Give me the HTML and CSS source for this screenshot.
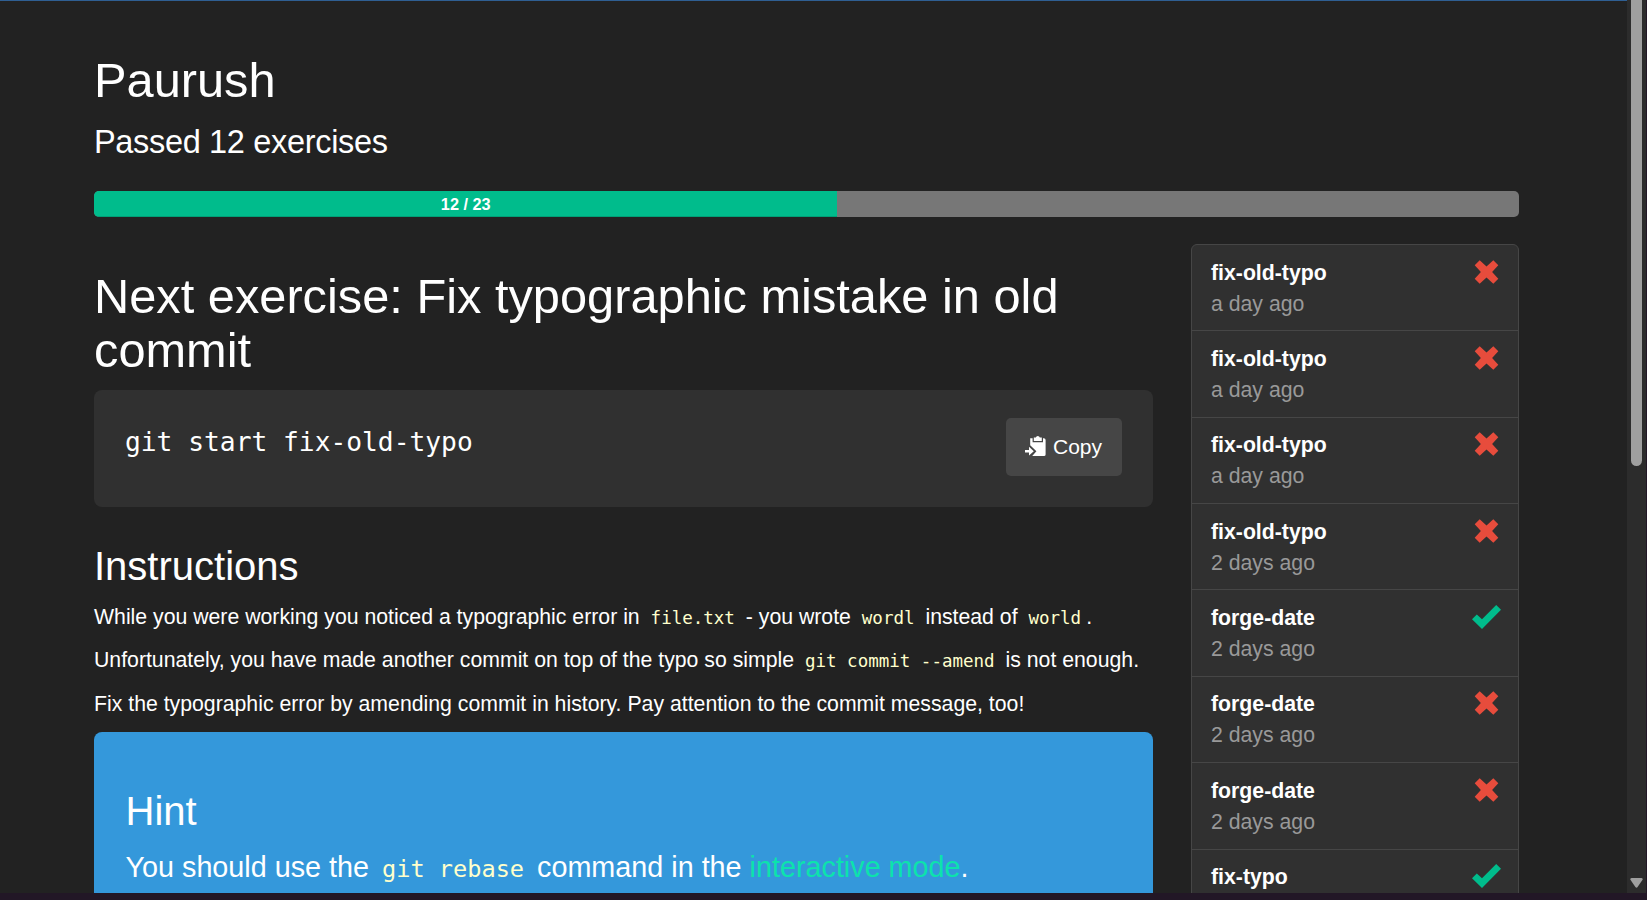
FILE: index.html
```html
<!DOCTYPE html>
<html lang="en">
<head>
<meta charset="utf-8">
<title>Paurush</title>
<link rel="stylesheet" href="styles.css">
</head>
<body>
<svg class="sprite" aria-hidden="true">
  <symbol id="remove" viewBox="0 0 24 24"><path d="M5.2 .2 12 6.4 18.8 .2 23.8 5.2 17.6 12 23.8 18.8 18.8 23.8 12 17.6 5.2 23.8 .2 18.8 6.4 12 .2 5.2Z"/></symbol>
  <symbol id="ok" viewBox="0 0 29 24"><path d="M24.2 0 29 4.8 10 24 0 14.2 4.8 9.5 10 14.3Z"/></symbol>
</svg>
<div class="viewport">
  <main class="page">
    <h1 class="user">Paurush</h1>
    <h3 class="passed">Passed 12 exercises</h3>
    <div class="progress"><div class="progress-bar" style="width: 52.17%">12 / 23</div></div>
    <div class="columns">
      <section class="exercise">
        <h1 class="next">Next exercise: Fix typographic mistake in old commit</h1>
        <div class="command">
          <code class="command-text">git start fix-old-typo</code>
          <button class="copy" type="button">
            <svg class="copy-icon" viewBox="0 0 21 20"><path d="M5.2 2.2H7.6V6.2H18V2.2H18.8Q20.6 2.2 20.6 4V18.4Q20.6 20 19 20H7.2L11.4 15.2 5.2 9.2Z"/><path d="M8.8 1.6H10.8Q11.2 0 12.8 0T14.8 1.6H16.8V5H8.8Z"/><path d="M0 14H4V10.8L8.8 15.2 4 19.4V16.4H0Z"/></svg>
            <span>Copy</span>
          </button>
        </div>
        <h2 class="instructions">Instructions</h2>
        <p class="text t1">While you were working you noticed a typographic error in <code>file.txt</code> - you wrote <code>wordl</code> instead of <code>world</code>.</p>
        <p class="text t2">Unfortunately, you have made another commit on top of the typo so simple <code>git commit --amend</code> is not enough.</p>
        <p class="text t3">Fix the typographic error by amending commit in history. Pay attention to the commit message, too!</p>
        <div class="hint">
          <h2>Hint</h2>
          <p>You should use the <code>git rebase</code> command in the <a>interactive mode</a>.</p>
        </div>
      </section>
      <aside class="history">
        <div class="entry"><div><h4>fix-old-typo</h4><p>a day ago</p></div><svg class="fail"><use href="#remove"/></svg></div>
        <div class="entry"><div><h4>fix-old-typo</h4><p>a day ago</p></div><svg class="fail"><use href="#remove"/></svg></div>
        <div class="entry"><div><h4>fix-old-typo</h4><p>a day ago</p></div><svg class="fail"><use href="#remove"/></svg></div>
        <div class="entry"><div><h4>fix-old-typo</h4><p>2 days ago</p></div><svg class="fail"><use href="#remove"/></svg></div>
        <div class="entry"><div><h4>forge-date</h4><p>2 days ago</p></div><svg class="pass"><use href="#ok"/></svg></div>
        <div class="entry"><div><h4>forge-date</h4><p>2 days ago</p></div><svg class="fail"><use href="#remove"/></svg></div>
        <div class="entry"><div><h4>forge-date</h4><p>2 days ago</p></div><svg class="fail"><use href="#remove"/></svg></div>
        <div class="entry"><div><h4>fix-typo</h4></div><svg class="pass"><use href="#ok"/></svg></div>
      </aside>
    </div>
  </main>
  <div class="scrollbar"><div class="thumb"></div><svg class="down" viewBox="0 0 13 10"><path d="M1.5 0H11.5Q13.4 .4 12.4 2L7.6 9Q6.5 10.4 5.4 9L.6 2Q-.4 .4 1.5 0Z"/></svg></div>
</div>
</body>
</html>
```
FILE: styles.css
```css
* { box-sizing: border-box; }
body {
  margin: 0;
  height: 900px;
  overflow: hidden;
  background: #221726;
  color: #fff;
  font-family: "Liberation Sans", Arial, sans-serif;
  font-size: 21.25px;
}
h1, h2, h3, h4, p { margin: 0; font-weight: 400; }
.sprite { display: none; }
.viewport {
  display: flex;
  height: 893px;
  overflow: hidden;
  background: #222;
}
.page {
  flex: 1;
  min-width: 0;
  padding: 52px 108px 0 94px;
  border-top: 1px solid #2f5f93;
}
h1 { font-size: 48.75px; line-height: 54px; }
h2 { font-size: 40px; line-height: 44px; }
.passed { margin-top: 17px; font-size: 32.5px; line-height: 36px; letter-spacing: -.33px; }
.progress {
  margin-top: 31px;
  height: 26px;
  border-radius: 5px;
  background: #777;
  overflow: hidden;
}
.progress-bar {
  height: 100%;
  background: #00bc8c;
  box-shadow: inset 0 -1px 0 rgba(0, 0, 0, .15);
  font-size: 16.25px;
  font-weight: 700;
  line-height: 27px;
  text-align: center;
}
.columns { display: flex; margin-top: 27px; }
.exercise { width: 1059px; margin-right: 38px; padding-top: 25px; }
.command {
  display: flex;
  justify-content: space-between;
  height: 117px;
  margin-top: 13px;
  padding: 28px 31px 0 31px;
  border-radius: 8px;
  background: #303030;
}
code { font-family: "DejaVu Sans Mono", monospace; }
.command-text { font-size: 26.26px; line-height: 48px; }
.copy {
  display: flex;
  align-items: center;
  gap: 7px;
  width: 116px;
  height: 58px;
  padding: 0 0 0 19px;
  border: 0;
  border-radius: 5px;
  background: #464646;
  color: #fff;
  font: 21px/30px "Liberation Sans", Arial, sans-serif;
}
.copy-icon { width: 21px; height: 20px; margin-top: -3px; fill: #fff; }
.instructions { margin-top: 37px; }
.text { height: 30px; line-height: 30px; white-space: nowrap; }
.t1 { margin-top: 14px; }
.t2 { margin-top: 13px; }
.t3 { margin-top: 14px; }
.text code { padding: 0 5px; color: #ffffcc; font-size: 17.5px; }
.hint {
  height: 200px;
  margin-top: 13px;
  padding: 57px 32px 0 31.5px;
  border-radius: 8px;
  background: #3498db;
}
.hint p { margin-top: 14px; font-size: 28.75px; line-height: 40px; white-space: nowrap; }
.hint code { padding: 0 5px; color: #ffffcc; font-size: 23.6px; }
.hint a { color: #0ce3ac; }
.history {
  width: 328px;
  border: 1px solid #464646;
  border-radius: 6px 6px 0 0;
  background: #303030;
}
.entry {
  display: flex;
  justify-content: space-between;
  height: 86.36px;
  padding: 11.5px 17px 0 19px;
  border-bottom: 1px solid #464646;
}
.entry h4 { font-size: 21.25px; font-weight: 700; line-height: 32px; }
.entry p { color: #999; font-size: 21.25px; line-height: 30px; }
.entry svg { width: 29px; height: 24px; margin-top: 3px; }
.fail { fill: #e74c3c; }
.pass { fill: #00bc8c; }
.scrollbar {
  display: flex;
  flex-direction: column;
  justify-content: space-between;
  align-items: center;
  width: 20px;
  padding-bottom: 5px;
  border-right: 1px solid #221726;
  background: #2c2c2c;
}
.thumb { width: 11px; height: 466px; border-radius: 0 0 6px 6px; background: #9f9f9f; }
.down { width: 13px; height: 10px; fill: #9f9f9f; }
```
